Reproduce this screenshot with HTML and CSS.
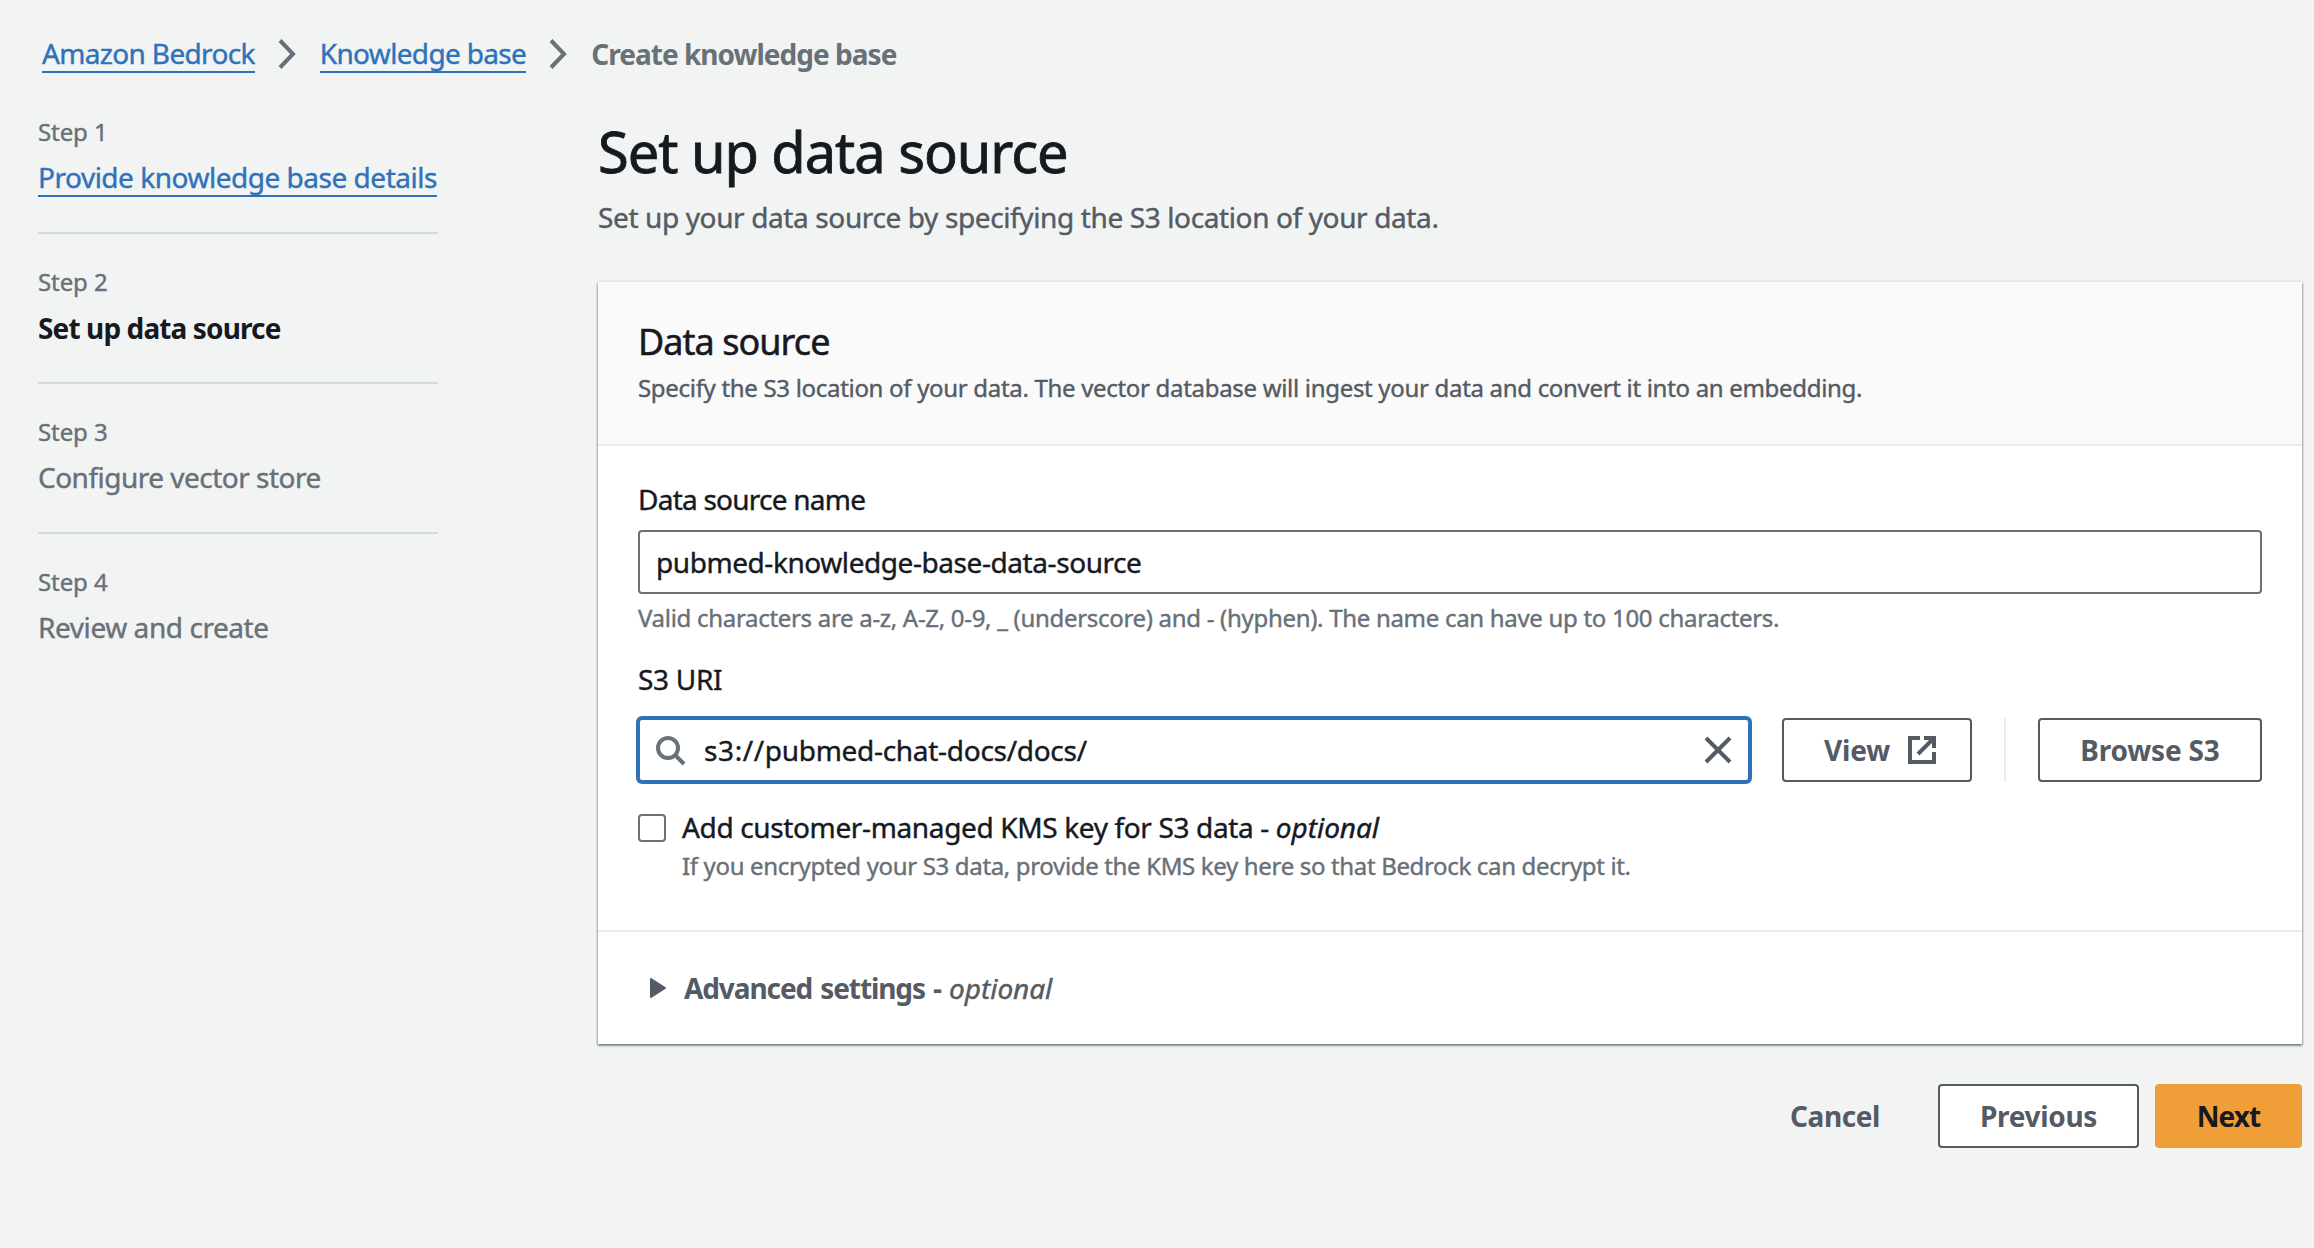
FILE: index.html
```html
<!DOCTYPE html>
<html lang="en">
<head>
<meta charset="utf-8">
<title>Create knowledge base</title>
<link rel="stylesheet" href="styles.css">
</head>
<body>
<nav class="breadcrumbs">
  <a class="link crumb">Amazon Bedrock</a>
  <svg class="chevron" width="20" height="32" viewBox="0 0 20 32"><path d="M3 2.5 16 16 3 29.5" fill="none" stroke="currentColor" stroke-width="4"/></svg>
  <a class="link crumb">Knowledge base</a>
  <svg class="chevron" width="20" height="32" viewBox="0 0 20 32"><path d="M3 2.5 16 16 3 29.5" fill="none" stroke="currentColor" stroke-width="4"/></svg>
  <span class="crumb-current">Create knowledge base</span>
</nav>
<div class="layout">
  <ol class="steps">
    <li class="step"><span class="step-label">Step 1</span><a class="link step-title step-link">Provide knowledge base details</a></li>
    <li class="step"><span class="step-label">Step 2</span><span class="step-title step-active">Set up data source</span></li>
    <li class="step"><span class="step-label">Step 3</span><span class="step-title step-configure">Configure vector store</span></li>
    <li class="step"><span class="step-label">Step 4</span><span class="step-title">Review and create</span></li>
  </ol>
  <main class="main">
    <h1 class="title">Set up data source</h1>
    <p class="subtitle">Set up your data source by specifying the S3 location of your data.</p>
    <section class="card">
      <header class="card-header">
        <h2 class="card-title">Data source</h2>
        <p class="card-desc">Specify the S3 location of your data. The vector database will ingest your data and convert it into an embedding.</p>
      </header>
      <div class="card-body">
        <div class="label">Data source name</div>
        <div class="input name-input">pubmed-knowledge-base-data-source</div>
        <div class="hint">Valid characters are a-z, A-Z, 0-9, _ (underscore) and - (hyphen). The name can have up to 100 characters.</div>
        <div class="label uri-label">S3 URI</div>
        <div class="uri-row">
          <div class="input search">
            <svg class="search-icon" width="32" height="32" viewBox="0 0 32 32"><g fill="none" stroke="currentColor" stroke-width="4"><circle cx="13" cy="14" r="10"/><path d="M20 21l9 9"/></g></svg>
            <span class="search-value"><span class="scheme">s3://</span>pubmed-chat-docs/docs/</span>
            <svg class="clear-icon" width="28" height="28" viewBox="0 0 28 28"><path d="M2 2 26 26M26 2 2 26" fill="none" stroke="currentColor" stroke-width="4"/></svg>
          </div>
          <button class="button view">View<svg width="28" height="28" viewBox="0 0 28 28"><g fill="none" stroke="currentColor" stroke-width="4"><path d="M12 2H2V26H26V16"/><path d="M16 2H26V12M26 2 10 18"/></g></svg></button>
          <span class="divider"></span>
          <button class="button browse">Browse S3</button>
        </div>
        <div class="check-row">
          <span class="checkbox"></span>
          <div>
            <div class="check-label">Add customer-managed KMS key for S3 data - <em>optional</em></div>
            <div class="hint check-hint">If you encrypted your S3 data, provide the KMS key here so that Bedrock can decrypt it.</div>
          </div>
        </div>
      </div>
      <div class="advanced">
        <svg width="16" height="20" viewBox="0 0 16 20"><path d="M1 1 15 10 1 19Z" fill="currentColor" stroke="currentColor" stroke-width="2" stroke-linejoin="round"/></svg>
        <span class="advanced-text">Advanced settings - <em>optional</em></span>
      </div>
    </section>
    <div class="actions">
      <span class="cancel">Cancel</span>
      <button class="button previous">Previous</button>
      <button class="button next">Next</button>
    </div>
  </main>
</div>
</body>
</html>
```
FILE: styles.css
```css
* { box-sizing: border-box; }
body {
  margin: 0;
  min-height: 1248px;
  padding-top: 33px;
  background: #f2f4f3;
  color: #16191f;
  font: 400 28px/40px "Noto Sans", sans-serif;
  white-space: nowrap;
  -webkit-text-stroke: 0.4px currentColor;
}
h1, h2, p, ol { margin: 0; padding: 0; font-weight: 400; }
ol { list-style: none; }
svg { display: block; flex: none; }

.link { color: #2f72b9; border-bottom: 2px solid #2f72b9; height: 40px; }

.breadcrumbs { display: flex; height: 40px; padding-left: 42px; }
.crumb { line-height: 41px; letter-spacing: -0.66px; }
.chevron { margin: 5px 23px 0 22px; color: #687078; }
.crumb-current { line-height: 42px; color: #687078; font-weight: 700; letter-spacing: -0.98px; -webkit-text-stroke: 0; }

.layout { display: flex; padding: 11px 12px 0 38px; }

.steps { width: 400px; margin-right: 160px; flex: none; color: #687078; }
.step { display: flex; flex-direction: column; align-items: flex-start; padding: 30px 0 35px; border-bottom: 2px solid #d5dbdb; }
.step:last-child { border-bottom: 0; }
.step-label { margin-bottom: 7px; font-size: 24px; line-height: 36px; letter-spacing: -0.1px; }
.step-title { height: 40px; letter-spacing: -0.43px; }
.step-link { letter-spacing: -0.48px; }
.step-active { line-height: 42px; color: #16191f; font-weight: 700; letter-spacing: -0.88px; -webkit-text-stroke: 0; }
.step-configure { letter-spacing: -0.51px; }

.main { flex: 1; min-width: 0; padding-top: 27px; }
.title { font-size: 56px; line-height: 80px; letter-spacing: -1.05px; -webkit-text-stroke-width: 0.8px; }
.subtitle { margin: 6px 0 45px; color: #545b64; letter-spacing: -0.38px; }

.card {
  background: #fff;
  box-shadow: 0 2px 2px 0 rgba(0, 28, 36, 0.3), 1px 1px 2px 0 rgba(0, 28, 36, 0.25), -1px 1px 2px 0 rgba(0, 28, 36, 0.25), 0 -2px 0 0 #eaeded;
}
.card-header { height: 164px; padding: 36px 40px 0; background: #fafafa; border-bottom: 2px solid #eaeded; }
.card-title { font-size: 36px; line-height: 48px; letter-spacing: -0.96px; -webkit-text-stroke-width: 0.5px; }
.card-desc { margin-top: 4px; color: #545b64; font-size: 24px; line-height: 36px; letter-spacing: -0.31px; }

.card-body { height: 486px; padding: 33px 40px 0; border-bottom: 2px solid #eaeded; }
.label { letter-spacing: -0.76px; }
.input { height: 64px; border: 2px solid #687078; border-radius: 4px; background: #fff; line-height: 60px; }
.name-input { margin-top: 11px; padding-left: 16px; letter-spacing: -0.43px; }
.hint { margin-top: 6px; color: #687078; font-size: 24px; line-height: 36px; letter-spacing: -0.3px; }
.uri-label { margin-top: 23px; letter-spacing: -0.3px; }

.uri-row { display: flex; margin-top: 19px; }
.search { display: flex; align-items: center; flex: 1; margin-right: 32px; padding: 0 16px 0 15px; border-color: #2f72b9; box-shadow: 0 0 0 2px #2f72b9; }
.search-icon { color: #687078; }
.search-value { flex: 1; margin-left: 17px; letter-spacing: -0.29px; }
.scheme { letter-spacing: 0.6px; }
.clear-icon { color: #545b64; }
.divider { width: 2px; margin: 0 32px; background: #eaeded; }

.button {
  display: flex;
  align-items: center;
  justify-content: center;
  height: 64px;
  padding: 0;
  border: 2px solid #545b64;
  border-radius: 4px;
  background: #fff;
  color: #545b64;
  font: 700 28px/60px "Noto Sans", sans-serif;
  -webkit-text-stroke: 0;
}
.view { width: 190px; padding-left: 6px; gap: 18px; letter-spacing: -0.2px; }
.browse { width: 224px; letter-spacing: -0.17px; }

.check-row { display: flex; gap: 16px; margin-top: 25px; }
.checkbox { width: 28px; height: 28px; margin-top: 7px; border: 2px solid #687078; border-radius: 4px; }
.check-label { letter-spacing: -0.36px; }
.check-label em { letter-spacing: -0.05px; }
.check-hint { margin-top: 1px; letter-spacing: -0.34px; }

.advanced { display: flex; align-items: center; gap: 18px; height: 112px; padding: 0 0 0 52px; color: #545b64; }
.advanced-text { font-weight: 700; letter-spacing: -1.1px; word-spacing: 2px; -webkit-text-stroke: 0; }
.advanced-text em { font-weight: 400; letter-spacing: -0.05px; -webkit-text-stroke: 0.4px; }

.actions { display: flex; justify-content: flex-end; margin-top: 40px; }
.cancel { margin-right: 58px; color: #545b64; font-weight: 700; line-height: 64px; letter-spacing: -0.4px; -webkit-text-stroke: 0; }
.previous { width: 201px; letter-spacing: -0.3px; }
.next { width: 147px; margin-left: 16px; border-color: #f09e38; background: #f09e38; color: #16191f; letter-spacing: -0.9px; }
```
